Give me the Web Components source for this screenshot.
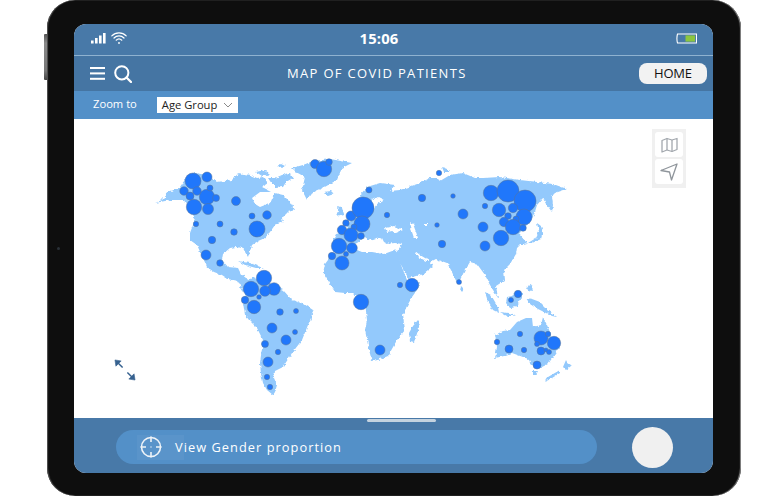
<!DOCTYPE html>
<html><head><meta charset="utf-8"><style>
html,body{margin:0;height:496px;overflow:hidden;background:#fff;font-family:"Open Sans",sans-serif}
</style></head><body>
<tablet-frame>
  <status-bar></status-bar>
  <nav-bar title-text="MAP OF COVID PATIENTS"></nav-bar>
  <zoom-bar></zoom-bar>
  <world-map></world-map>
  <bottom-bar></bottom-bar>
</tablet-frame>
<script>
function def(name, html, setup){
  customElements.define(name, class extends HTMLElement{
    constructor(){super();this.attachShadow({mode:'open'}).innerHTML=html;}
    connectedCallback(){ if(setup) setup.call(this,this.shadowRoot); }
  });
}
def('tablet-frame',`<style>
:host{display:block;width:694px;height:496px;margin-left:47px;box-sizing:border-box;padding:24px 28px 0 27px;background:#0e0e0e;border-radius:28px;box-shadow:inset -1px 0 1px 0 #8a8a8a,inset 1px 0 1px 0 #555;position:relative}
.screen{width:639px;height:449px;border-radius:12px;overflow:hidden;display:flex;flex-direction:column;background:#fff}
.btn{position:absolute;left:-3px;top:34px;width:3px;height:46px;background:linear-gradient(#555,#8a8a8a 20%,#777 80%,#444);border-radius:1px 0 0 1px}
.cam{position:absolute;left:10px;top:247px;width:3px;height:3px;border-radius:50%;background:#2a3138}
</style><span class="btn"></span><span class="cam"></span><div class="screen"><slot></slot></div>`);

def('status-bar',`<style>
:host{display:flex;align-items:center;height:32px;box-sizing:border-box;flex:none;background:#4879a8;border-bottom:1px solid #8fb2d0;padding:0 16px 3px 17px;color:#fff}
.l{display:flex;align-items:center;gap:5px;width:248px}
.t{font:700 14.800px "Open Sans",sans-serif;width:80px;text-align:center;letter-spacing:.2px}
.r{margin-left:auto;display:flex}
svg{display:block}
</style>
<div class="l">
<svg width="15" height="11" viewBox="0 0 15 11"><g fill="#fff"><rect x="0" y="7.500" width="2.600" height="3"/><rect x="4" y="5" width="2.600" height="5.500"/><rect x="8" y="2.500" width="2.600" height="8"/><rect x="12" y="0" width="2.600" height="10.500"/></g></svg>
<svg width="16" height="14" viewBox="0 0 16 14" fill="none" stroke="#fff" stroke-width="1.200" stroke-linecap="round"><path d="M.8 4.800C4.800 .8 11.200 .8 15.200 4.800"/><path d="M3 7C5.800 4.200 10.200 4.200 13 7"/><path d="M5.200 9.200C6.800 7.700 9.200 7.700 10.800 9.200"/><circle cx="8" cy="12" r=".9" fill="#fff" stroke="none"/></svg>
</div>
<div class="t">15:06</div>
<div class="r"><svg width="21" height="11" viewBox="0 0 21 11"><path d="M1.500 1H20.500V10H1.500Q.3 5.500 1.500 1Z" fill="none" stroke="#fff" stroke-width="1.100"/><rect x="9.500" y="2.400" width="9.500" height="6.200" fill="#8cc63f"/></svg></div>`);

def('nav-bar',`<style>
:host{display:flex;align-items:center;height:35px;flex:none;background:#4575a3;padding:0 6px 0 16px;color:#fff}
.i{display:flex;align-items:center;gap:9px}
svg{display:block}
.t{margin-left:155px;font:500 13px "Open Sans",sans-serif;letter-spacing:1.320px;white-space:nowrap;padding-bottom:2px}
</style>
<div class="i">
<svg width="15" height="15" viewBox="0 0 15 15"><g fill="#fff"><rect y="1" width="15" height="2"/><rect y="6.400" width="15" height="2"/><rect y="11.800" width="15" height="2"/></g></svg>
<svg width="18" height="18" viewBox="0 0 18 18" fill="none" stroke="#fff"><circle cx="7.800" cy="7.800" r="6.600" stroke-width="2"/><path d="M12.500 12.500L17 17" stroke-width="2.300" stroke-linecap="round"/></svg>
</div>
<div class="t"></div>
<home-button style="margin-left:auto">HOME</home-button>`,function(r){r.querySelector('.t').textContent=this.getAttribute('title-text');});

def('home-button',`<style>
:host{display:flex;align-items:center;justify-content:center;width:68px;height:21px;box-sizing:border-box;padding-bottom:2px;border-radius:8px;background:#f2f2f2;color:#111;font:400 13px "Open Sans",sans-serif;letter-spacing:-.2px}
</style><slot></slot>`);

def('zoom-bar',`<style>
:host{display:flex;align-items:center;height:28px;flex:none;background:#5390c8;padding:0 0 3px 19px;color:#fff;font:400 11.200px "Open Sans",sans-serif;box-sizing:border-box}
.s{margin-left:20px;width:81px;height:16px;box-sizing:border-box;background:#fff;color:#222;display:flex;align-items:center;justify-content:space-between;padding:0 5px 1px;font-size:11.200px;position:relative;top:1.500px}
</style><span>Zoom to</span>
<div class="s"><span>Age Group</span><svg width="10" height="6" viewBox="0 0 10 6" fill="none" stroke="#8a8a8a" stroke-width="1"><path d="M1 1l4 4 4-4"/></svg></div>`);

const LAND=[
"M155 203L162 200L165 197L167 192L174 190L180 187L186 178L195 173L207 175L217 182L224 181L232 180L236 176L238 173L244 174L250 175L257 178L263 177L268 183L262 187L268 190L272 192L260 192L252 198L255 204L260 207L265 205L270 203L272 198L275 193L283 195L287 199L290 202L295 210L288 212L282 218L283 222L275 225L270 232L265 238L258 241L252 245L250 251L248 257L245 252L243 248L236 247L230 248L223 254L222 260L228 267L238 268L241 274L246 278L250 279L254 277L257 280L250 287L245 293L243 291L237 281L228 279L222 275L214 272L207 267L203 258L197 245L190 240L190 233L193 225L195 218L190 210L185 200L170 200Z",
"M277 166L281 164L285 166L281 168Z M268 178L275 178L282 175L290 173L293 178L286 182L283 187L276 188L272 184Z M256 172L265 170L270 174L262 176Z",
"M238 261L250 263L263 268L256 268L245 265Z M263 271L270 273L266 274Z",
"M292 168L303 165L313 161L330 159L352 163L342 168L339 175L337 180L330 184L323 188L316 191L310 195L307 200L302 190L305 177L296 172Z",
"M324 192L331 191L334 194L328 196Z",
"M245 293L250 285L257 279L268 282L283 290L292 300L304 304L313 310L311 318L308 325L302 340L292 353L283 367L275 371L274 378L277 385L275 392L273 395L267 390L263 383L261 373L260 363L263 340L257 328L249 320L245 315L243 303Z",
"M323 273L325 264L331 256L340 250L352 248L362 252L372 252L384 254L395 250L398 254L401 265L407 280L413 284L420 282L417 290L412 297L406 308L403 315L405 330L397 340L388 356L378 360L372 361L369 350L365 330L367 320L365 302L353 293L345 293L335 292Z",
"M418 320L419 328L414 342L410 341L409 333L413 326Z",
"M338 206L342 208L344 214L337 216L339 211Z",
"M333 240L336 234L345 232L350 222L356 212L362 204L360 195L367 187L380 183L395 185L390 191L400 190L420 183L430 178L437 178L440 181L450 175L463 173L475 178L483 178L500 177L520 180L537 182L553 184L567 189L555 193L552 196L553 205L552 212L546 204L543 198L537 205L534 215L530 222L522 230L519 234L527 243L520 245L517 248L516 254L510 264L504 270L505 280L499 284L496 286L498 298L490 285L485 275L477 264L470 262L465 270L460 280L458 285L451 270L447 263L436 259L430 262L433 266L423 274L409 278L401 265L396 253L402 244L395 243L385 244L382 238L376 239L370 241L365 237L358 243L352 248L341 252L334 250Z",
"M442 167L447 169L450 172L444 172Z",
"M537 223L541 226L543 232L541 239L532 243L528 243L536 238L539 232Z",
"M461 286L464 289L462 292L460 289Z",
"M485 292L491 295L498 307L499 313L493 310L488 302Z",
"M500 312L508 313L515 316L507 316Z",
"M507 297L512 296L518 290L522 292L522 298L516 307L510 308L506 303Z",
"M526 287L531 285L533 291L528 290Z",
"M526 298L532 299L540 302L548 310L557 317L552 316L544 312L536 308L530 304Z",
"M495 335L503 331L510 330L517 322L526 318L532 318L533 327L541 325L543 317L547 325L552 337L560 342L559 348L553 357L548 364L542 367L534 366L530 363L527 357L523 357L512 353L504 356L495 358L497 347Z",
"M533 371L538 371L536 375L533 375Z",
"M566 360L568 364L571 366L566 370L563 367Z M560 370L560 373L552 378L545 381L548 377Z"
];
const SEA=[
"M385 228L394 226L403 230L396 233L391 231L387 232Z",
"M410 222L413 224L416 232L418 238L414 238L412 232Z",
"M425 224L427 224L427 226L425 226Z",
"M415 251L420 255L430 261L426 261L418 257Z",
"M372 200L378 197L384 200L377 204L374 208L371 205Z",
"M352 246L365 238L372 240L378 246L384 244L394 245L396 249L388 251L375 250L365 250L352 250Z"
];
const DOTS=[[193,181,8],[207,177,5],[184,191,4.300],[190,196,4],[197,191,4.300],[207,197,7.700],[210,188,3],[216,198,3.500],[194,207,7.700],[208,209,5.500],[236,201,4.500],[267,215,4.300],[252,216,3],[196,224,2.700],[220,224,3],[234,232,3.300],[257,229,8],[212,240,3.700],[206,255,5],[220,263,3.300],
[315,164,4.500],[324,169,7.700],[329,162,3.300],
[351,216,5],[346,223,3.300],[342,230,4.700],[363,208,11],[362,224,8],[354,227,3],[351,235,7],[361,236,3.300],[339,246,7.700],[352,248,5.300],[346,254,2.500],[332,256,3.700],[342,263,7],
[369,190,3],[387,215,2.700],[422,198,3.700],[439,173,2.700],[453,196,2.300],[437,225,2.300],[463,214,5],[442,244,3.700],
[491,193,7.700],[508,191,11],[525,201,11],[485,206,2.700],[499,210,6.700],[513,208,4.700],[524,217,8],[508,216,3.300],[504,222,4.700],[516,219,3],[513,227,7.700],[523,228,3.300],[483,227,5],[501,238,7.700],[485,246,5],
[264,278,7.700],[251,289,7.700],[274,289,6.300],[265,291,5.300],[245,300,3.700],[259,297,2.300],[254,307,6.700],[280,312,3.300],[296,311,2.500],[272,328,5],[295,332,2.500],[286,340,5],[265,344,3.500],[278,352,2.700],[268,362,5],[267,377,2.700],[270,387,2.700],
[361,302,7.700],[400,285,2.700],[412,285,6.700],[380,350,5],[459,282,2.500],
[518,294,3.700],[511,300,2.500],[520,334,2.700],[497,342,2.700],[509,349,4],[524,350,2.700],[541,338,7],[548,334,2.700],[554,343,6.700],[537,344,2.500],[541,351,4],[546,350,2],[549,352,2.500],[537,365,4]];
def('world-map',`<style>
:host{display:block;flex:1;position:relative;background:#fff;min-height:0}
svg.m{display:block;width:100%;height:100%}
.tools{position:absolute;left:578px;top:10px;width:34px;height:59px;box-sizing:border-box;padding:3px 3px 4px;background:#f0f0f0;display:flex;flex-direction:column;gap:2px}
.tools div{flex:1;background:#fff;border-radius:3px;display:flex;align-items:center;justify-content:center}
.ex{position:absolute;left:40px;top:240px;display:block}
</style>
<svg class="m" viewBox="74 119 639 299"><defs><filter id="r" x="-2%" y="-2%" width="104%" height="104%"><feTurbulence type="fractalNoise" baseFrequency=".3" numOctaves="3" seed="4"/><feDisplacementMap in="SourceGraphic" scale="3.500" xChannelSelector="R" yChannelSelector="G"/></filter></defs>
<g id="land" filter="url(#r)"></g><g id="dots"></g></svg>
<div class="tools"><div><svg width="17" height="16" viewBox="0 0 17 16" fill="none" stroke="#a3a8ae" stroke-width="1.300" stroke-linejoin="round"><path d="M1 3.500L6 1.500L11 3L16 1.500V12.500L11 14.500L6 13L1 15Z"/><path d="M6 1.500V13M11 3V14.500"/></svg></div>
<div><svg width="18" height="18" viewBox="0 0 18 18" fill="none" stroke="#8f959b" stroke-width="1.300" stroke-linejoin="round"><path d="M1 7.500L17 1L11.500 17L9.500 9Z"/></svg></div></div>
<svg class="ex" width="22" height="22" viewBox="0 0 23 23" fill="#36618f" stroke="#36618f"><path d="M1 1L7.500 2L2 7.500Z" stroke-width=".6"/><path d="M4 4L9 9" fill="none" stroke-width="1.500"/><path d="M22 22L15.500 21L21 15.500Z" stroke-width=".6"/><path d="M14 14L19 19" fill="none" stroke-width="1.500"/></svg>`,
function(r){
 const ns='http://www.w3.org/2000/svg';
 const L=r.getElementById('land'),D=r.getElementById('dots');
 LAND.forEach(d=>{const p=document.createElementNS(ns,'path');p.setAttribute('d',d);p.setAttribute('fill','#93c9fc');L.appendChild(p);});
 SEA.forEach(d=>{const p=document.createElementNS(ns,'path');p.setAttribute('d',d);p.setAttribute('fill','#fff');L.appendChild(p);});
 DOTS.forEach(([x,y,c])=>{const e=document.createElementNS(ns,'circle');e.setAttribute('cx',x);e.setAttribute('cy',y);e.setAttribute('r',c);e.setAttribute('fill','#2077fb');e.setAttribute('stroke','#5d7492');e.setAttribute('stroke-width','.5');D.appendChild(e);});
});

def('bottom-bar',`<style>
:host{display:flex;align-items:center;flex:none;height:55px;background:#4879a8;position:relative;padding:3px 0 0 42px;box-sizing:border-box;color:#fff}
.h{position:absolute;left:293px;top:1px;width:69px;height:3px;border-radius:2px;background:#c5d3df}
.p{width:481px;height:34px;border-radius:17px;background:#5390c8;display:flex;align-items:center;padding-left:21px;box-sizing:border-box;font:500 12.800px "Open Sans",sans-serif;letter-spacing:1.040px}
.i{width:47px;height:25px;background:#5a94ca;display:flex;align-items:center;padding-left:3px;box-sizing:border-box;margin-right:-9px;flex:none}
.c{margin-left:35px;width:41px;height:41px;border-radius:50%;background:#f0f0f0;flex:none}
svg{display:block}
</style><span class="h"></span>
<div class="p"><span class="i"><svg width="22" height="22" viewBox="0 0 22 22" fill="none" stroke="#eef3f8" stroke-width="1.600"><circle cx="11" cy="11" r="9.500"/><path d="M11 .5V6M11 16V21.500M.5 11H6M16 11H21.500"/><circle cx="11" cy="11" r=".7" fill="#eef3f8" stroke="none"/></svg></span><span>View Gender proportion</span></div>
<div class="c"></div>`);
</script>
</body></html>
